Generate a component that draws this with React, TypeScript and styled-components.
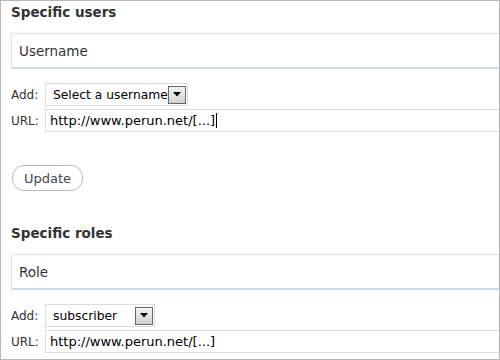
import styled, { createGlobalStyle } from "styled-components";

const Global = createGlobalStyle`
  body {
    margin: 0;
    background: #fff;
    font-family: "DejaVu Sans", Verdana, sans-serif;
  }
`;

const Frame = styled.div`
  width: 500px;
  height: 360px;
  box-sizing: border-box;
  border: 1px solid #b6b6b6;
  padding: 3px 0 0 10px;
  overflow: hidden;
  background: #fff;
`;

const Section = styled.section<{ $gap?: number }>`
  margin-top: ${(p) => p.$gap ?? 0}px;
`;

const Heading = styled.h3`
  margin: 0;
  font-size: 13.5px;
  line-height: 16px;
  font-weight: 700;
  color: #333;
`;

const NameBox = styled.div`
  margin: 13px -20px 0 0;
  height: 33px;
  display: flex;
  align-items: center;
  padding-left: 7px;
  border: 1px solid #dde5ea;
  border-bottom: 2px solid #cfdce6;
  border-right: none;
  font-size: 13.5px;
  color: #333;
`;

const Field = styled.div<{ $gap: number }>`
  display: flex;
  align-items: center;
  margin-top: ${(p) => p.$gap}px;
`;

const Label = styled.span`
  width: 34px;
  flex: none;
  font-size: 12px;
  color: #333;
`;

const Select = styled.div<{ $width: number }>`
  width: ${(p) => p.$width}px;
  height: 23px;
  box-sizing: border-box;
  display: flex;
  align-items: center;
  padding: 0 1px 0 7px;
  border: 1px solid #dcdcdc;
  font-size: 12.3px;
  color: #000;
`;

const SelectText = styled.span`
  flex: 1;
  white-space: nowrap;
`;

const Arrow = styled.span`
  flex: none;
  width: 18px;
  height: 18px;
  box-sizing: border-box;
  border: 1px solid #666;
  background: linear-gradient(#f4f4f4, #d2d2d2);
  display: flex;
  justify-content: center;
  padding-top: 5px;
`;

const UrlInput = styled.div`
  flex: 1;
  margin-right: -20px;
  height: 23px;
  box-sizing: border-box;
  display: flex;
  align-items: center;
  padding-left: 4px;
  border: 1px solid #dedede;
  border-right: none;
  font-size: 13px;
  color: #000;
  white-space: nowrap;
`;

const Caret = styled.span`
  display: inline-block;
  width: 1px;
  height: 15px;
  margin-left: 1px;
  background: #000;
`;

const UpdateButton = styled.button`
  display: block;
  margin: 33px 0 0 1px;
  width: 71px;
  height: 26px;
  padding: 0;
  border: 1px solid #bbb;
  border-radius: 12px;
  background: #fff;
  font-family: "DejaVu Sans", Verdana, sans-serif;
  font-size: 13px;
  color: #464646;
`;

const DropArrow = () => (
  <Arrow>
    <svg width="8" height="5" viewBox="0 0 8 5">
      <path d="M0 0h8L4 4.5z" fill="#000" />
    </svg>
  </Arrow>
);

type BlockProps = {
  title: string;
  placeholder: string;
  choice: string;
  selectWidth: number;
  caret?: boolean;
  gap?: number;
};

const Block = ({ title, placeholder, choice, selectWidth, caret, gap }: BlockProps) => (
  <Section $gap={gap}>
    <Heading>{title}</Heading>
    <NameBox>{placeholder}</NameBox>
    <Field $gap={14}>
      <Label>Add:</Label>
      <Select $width={selectWidth}>
        <SelectText>{choice}</SelectText>
        <DropArrow />
      </Select>
    </Field>
    <Field $gap={3}>
      <Label>URL:</Label>
      <UrlInput>
        http://www.perun.net/[...]
        {caret && <Caret />}
      </UrlInput>
    </Field>
  </Section>
);

export default function App() {
  return (
    <Frame>
      <Global />
      <Block
        title="Specific users"
        placeholder="Username"
        choice="Select a username"
        selectWidth={143}
        caret
      />
      <UpdateButton>Update</UpdateButton>
      <Block
        title="Specific roles"
        placeholder="Role"
        choice="subscriber"
        selectWidth={110}
        gap={34}
      />
    </Frame>
  );
}
